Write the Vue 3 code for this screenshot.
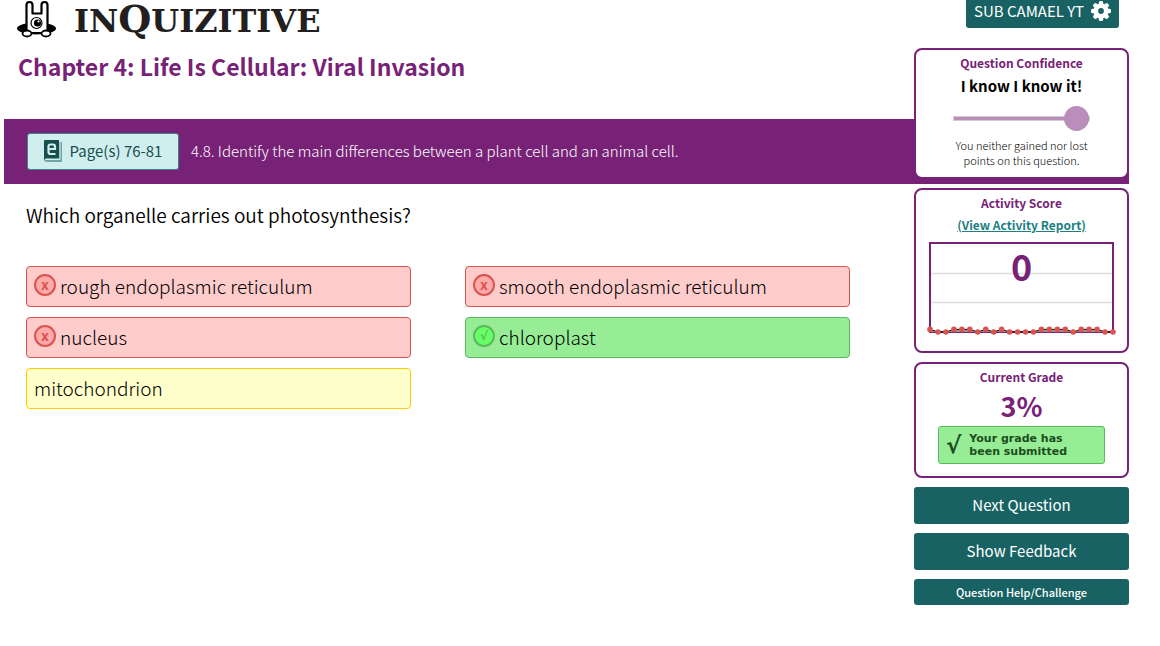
<script setup>
const answers = [
  { text: 'rough endoplasmic reticulum', state: 'wrong', mark: 'x' },
  { text: 'smooth endoplasmic reticulum', state: 'wrong', mark: 'x' },
  { text: 'nucleus', state: 'wrong', mark: 'x' },
  { text: 'chloroplast', state: 'right', mark: '√' },
  { text: 'mitochondrion', state: 'missed', mark: '' },
]

const history = [1, 0, 0, 1, 1, 1, 0, 1, 0, 1, 0, 0, 0, 0, 1, 1, 1, 1, 0, 1, 1, 1, 0, 0]
const points = history.map((value, i) => ({
  x: 4 + (i * 183) / (history.length - 1),
  y: 92 - value * 2.6,
}))
const line = points.map((p) => `${p.x},${p.y}`).join(' ')
</script>

<template>
  <div class="page">
    <header class="masthead">
      <div class="brand">
        <svg class="mascot" width="40" height="38" viewBox="0 0 40 38" aria-hidden="true">
          <ellipse cx="19.500" cy="28.500" rx="19.500" ry="6" fill="#000" />
          <path
            d="M9.500 33V5Q9.500 2 12.500 2T15.500 5V13.500H24.500V5Q24.500 2 27.500 2T30.500 5V33Z"
            fill="#fff" stroke="#000" stroke-width="2.200" stroke-linejoin="round"
          />
          <circle cx="19.500" cy="23" r="5.500" fill="#fff" stroke="#000" stroke-width="1.200" />
          <circle cx="20.500" cy="23" r="3.600" fill="#000" />
          <circle cx="21.500" cy="21.500" r="1.100" fill="#fff" />
          <ellipse cx="10" cy="33.500" rx="4.500" ry="3" fill="#fff" stroke="#000" stroke-width="1.800" />
          <ellipse cx="29" cy="33.500" rx="4.500" ry="3" fill="#fff" stroke="#000" stroke-width="1.800" />
        </svg>
        <span class="wordmark">IN<span class="big">Q</span>UIZITIVE</span>
      </div>
      <h1>Chapter 4: Life Is Cellular: Viral Invasion</h1>
    </header>

    <div class="band">
      <button class="pages" type="button">
        <svg width="18" height="22" viewBox="0 0 18 22" aria-hidden="true">
          <path d="M3 2H18V22H3Q0 22 0 19V3Z" fill="#6fa5a5" />
          <path d="M1 19.500H16V2" fill="none" stroke="#d1eeee" stroke-width="1" />
          <path d="M0 1Q0 0 1 0H15V18H2Q1 18 1 20L0 19Z" fill="#174f50" />
          <path d="M4.500 9H11V6.500Q11 4.500 9 4.500H6.500Q4.500 4.500 4.500 6.500V12Q4.500 14 6.500 14H11.500" fill="none" stroke="#d1eeee" stroke-width="2.200" />
        </svg>
        Page(s) 76-81
      </button>
      <p>4.8. Identify the main differences between a plant cell and an animal cell.</p>
    </div>

    <main class="question">
      <h2>Which organelle carries out photosynthesis?</h2>
      <ul class="answers">
        <li v-for="a in answers" :key="a.text" :class="a.state">
          <span v-if="a.mark" class="mark">{{ a.mark }}</span>{{ a.text }}
        </li>
      </ul>
    </main>

    <aside class="side">
      <button class="user" type="button">
        SUB CAMAEL YT
        <svg width="20" height="20" viewBox="0 0 20 20" aria-hidden="true">
          <g fill="#fff">
            <rect v-for="n in 4" :key="n" x="7.800" y="0" width="4.400" height="20" rx="1.500" :transform="`rotate(${n * 45} 10 10)`" />
            <circle cx="10" cy="10" r="7.600" />
          </g>
          <circle cx="10" cy="10" r="2.900" fill="#186263" />
        </svg>
      </button>

      <section class="card confidence">
        <h3><label for="confidence">Question Confidence</label></h3>
        <strong>I know I know it!</strong>
        <input id="confidence" type="range" min="0" max="100" value="100" />
        <p>You neither gained nor lost<br />points on this question.</p>
      </section>

      <section class="card activity">
        <h3>Activity Score</h3>
        <a href="#">(View Activity Report)</a>
        <svg width="192" height="98" viewBox="0 0 192 98" role="img" aria-label="Activity score 0">
          <path d="M4 33.500H187M4 62.500H187" stroke="#ddd" stroke-width="1.500" />
          <rect x="4" y="3" width="183" height="89" fill="none" stroke="#772277" stroke-width="2" />
          <polygon :points="`${line} 187,92 4,92`" fill="#999" />
          <polyline :points="line" fill="none" stroke="#000" stroke-width="1" />
          <circle v-for="p in points" :key="p.x" :cx="p.x" :cy="p.y" r="2.800" fill="#d9534f" />
          <text x="95.500" y="41" text-anchor="middle">0</text>
        </svg>
      </section>

      <section class="card grade">
        <h3>Current Grade</h3>
        <strong>3%</strong>
        <div class="submitted">
          <span class="tick">√</span>
          <span>Your grade has<br />been submitted</span>
        </div>
      </section>

      <button class="action" type="button">Next Question</button>
      <button class="action" type="button">Show Feedback</button>
      <button class="action small" type="button">Question Help/Challenge</button>
    </aside>
  </div>
</template>

<style>
body {
  background: #fff;
}
</style>

<style scoped>
.page {
  display: grid;
  grid-template-columns: 1fr 215px;
  grid-template-rows: 119px 65px auto;
  margin: 0 31px 0 4px;
  font-family: "Noto Sans CJK SC", "Noto Sans", sans-serif;
  color: #000;
}
h1, h2, h3, p, ul {
  margin: 0;
  padding: 0;
}
button {
  font-family: inherit;
  cursor: pointer;
}
.masthead {
  grid-area: 1 / 1;
  padding-left: 14px;
}
.brand {
  display: flex;
  height: 50px;
}
.mascot {
  margin-left: -1px;
}
.wordmark {
  margin-left: 17px;
  font: bold 32px/38px "DejaVu Serif", serif;
  color: #231f20;
  white-space: nowrap;
}
.big {
  font-size: 38px;
}
h1 {
  font-size: 23px;
  line-height: 32px;
  font-weight: 700;
  color: #772277;
}
.band {
  grid-area: 2 / 1 / 3 / 3;
  display: flex;
  align-items: center;
  gap: 12px;
  padding-left: 23px;
  background: #772277;
}
.band p {
  padding-bottom: 2px;
  font-size: 15px;
  font-weight: 300;
  line-height: 24px;
  color: #fff;
}
.pages {
  display: flex;
  align-items: center;
  justify-content: center;
  gap: 8px;
  width: 152px;
  height: 37px;
  padding: 0 0 2px;
  border: 1px solid #3b8587;
  border-radius: 3px;
  background: #d1eeee;
  color: #174f50;
  font-size: 15px;
  line-height: 24px;
}
.question {
  grid-area: 3 / 1;
  padding: 17px 64px 0 22px;
}
h2 {
  font-size: 19px;
  line-height: 28px;
  font-weight: 350;
}
.answers {
  display: grid;
  grid-template-columns: 1fr 1fr;
  gap: 10px 54px;
  margin-top: 37px;
  list-style: none;
}
.answers li {
  display: flex;
  align-items: center;
  padding: 5px 7px 6px;
  border: 1px solid;
  border-radius: 4px;
  font-size: 19px;
  line-height: 28px;
  font-weight: 300;
}
.answers .wrong {
  background: #fcc;
  border-color: #d9534f;
}
.answers .right {
  background: #96ed96;
  border-color: #5cb85c;
}
.answers .missed {
  background: #ffc;
  border-color: #fc0;
}
.mark {
  box-sizing: border-box;
  width: 22px;
  height: 22px;
  margin: 0 4px 2px 0;
  border: 2px solid #d9534f;
  border-radius: 50%;
  background: #faa;
  color: #d9534f;
  font-size: 14px;
  line-height: 17px;
  font-weight: 700;
  text-align: center;
}
.right .mark {
  border-color: #5cb85c;
  background: #6f6;
  color: #5cb85c;
  font-size: 12px;
  line-height: 18px;
  font-family: "DejaVu Sans", sans-serif;
}
.side {
  grid-area: 1 / 2 / 4 / 3;
  display: flex;
  flex-direction: column;
  gap: 9px;
}
.user {
  display: flex;
  align-items: center;
  align-self: flex-end;
  justify-content: center;
  gap: 7px;
  width: 153px;
  height: 28px;
  margin: 0 10px 11px 0;
  padding: 0 0 6px 0;
  border: 0;
  border-radius: 0 0 3px 3px;
  background: #186263;
  color: #fff;
  font-size: 15px;
  line-height: 20px;
  white-space: nowrap;
}
.card {
  display: flex;
  flex-direction: column;
  align-items: center;
  box-sizing: border-box;
  border: 2px solid #772277;
  border-radius: 8px;
  background: #fff;
  text-align: center;
}
h3 {
  font-size: 12px;
  line-height: 18px;
  font-weight: 700;
  color: #772277;
}
.confidence {
  padding: 4px 0 9px;
}
.confidence strong {
  font-size: 15px;
  line-height: 28px;
}
.confidence p {
  font-size: 11px;
  line-height: 15px;
  font-weight: 300;
  margin-top: 7px;
}
input[type="range"] {
  appearance: none;
  width: 137px;
  height: 25px;
  margin: 6px 0 0;
  background: none;
}
input[type="range"]::-webkit-slider-runnable-track {
  box-sizing: border-box;
  height: 5px;
  border: 1px solid #ccc;
  background: #ba8dba;
}
input[type="range"]::-webkit-slider-thumb {
  appearance: none;
  width: 25px;
  height: 25px;
  margin-top: -11px;
  border-radius: 50%;
  background: #ba8dba;
}
.activity {
  padding: 4px 0 13px;
}
.activity a {
  margin-top: 4px;
  font-size: 12px;
  line-height: 18px;
  font-weight: 700;
  color: #1b8083;
}
.activity svg {
  margin-top: 6px;
  overflow: visible;
}
.activity text {
  font-size: 36px;
  font-weight: 700;
  fill: #772277;
}
.grade {
  padding: 4px 0 12px;
}
.grade strong {
  font-size: 27px;
  line-height: 40px;
  color: #772277;
}
.submitted {
  display: flex;
  align-items: center;
  gap: 8px;
  box-sizing: border-box;
  width: 167px;
  height: 38px;
  padding-left: 7px;
  border: 1px solid #5cb85c;
  border-radius: 3px;
  background: #96ed96;
  color: #1d4d1d;
  font: bold 11px/13px "DejaVu Sans", sans-serif;
  text-align: left;
}
.tick {
  font-size: 23px;
  line-height: 24px;
}
.action {
  padding: 6px 0 7px;
  border: 0;
  border-radius: 3px;
  background: #186263;
  color: #fff;
  font-size: 15px;
  line-height: 24px;
}
.action.small {
  padding: 4px 0;
  font-size: 11px;
  line-height: 18px;
  font-weight: 500;
}
</style>
